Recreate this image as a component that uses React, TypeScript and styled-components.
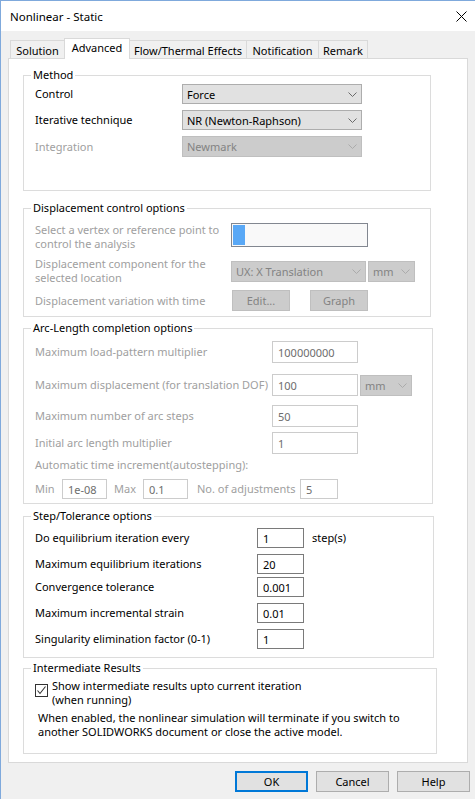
import React from "react";
import styled, { createGlobalStyle } from "styled-components";

const Global = createGlobalStyle`
  html, body { margin: 0; padding: 0; background: #f0f0f0; }
  body {
    font-family: "Segoe UI", "Noto Sans", sans-serif;
    font-size: 11px;
    color: #000;
  }
`;

const Window = styled.div`
  width: 475px;
  height: 799px;
  box-sizing: border-box;
  border-top: 1px solid #7fa9dc;
  border-left: 1px solid #7fa9dc;
  background: #f0f0f0;
  display: flex;
  flex-direction: column;
  overflow: hidden;
`;

const TitleBar = styled.div`
  height: 30px;
  flex: none;
  background: #fff;
  display: flex;
  align-items: center;
  justify-content: space-between;
  padding: 0 8px 0 9px;
`;

const Title = styled.div`
  font-size: 11.5px;
  line-height: 14px;
  padding-top: 1px;
`;

const Body = styled.div`
  padding: 7px 0 0 7px;
  display: flex;
  flex-direction: column;
`;

const TabStrip = styled.div`
  display: flex;
  align-items: flex-end;
  height: 21px;
  margin-bottom: -1px;
  padding-left: 2px;
`;

const Tab = styled.div<{ $w: number; $active?: boolean }>`
  box-sizing: border-box;
  width: ${(p) => p.$w}px;
  height: ${(p) => (p.$active ? 21 : 19)}px;
  margin-left: -1px;
  &:first-child { margin-left: 0; }
  border: 1px solid #d9d9d9;
  border-bottom: none;
  background: ${(p) => (p.$active ? "#fff" : "#f0f0f0")};
  position: ${(p) => (p.$active ? "relative" : "static")};
  z-index: ${(p) => (p.$active ? 1 : "auto")};
  display: flex;
  justify-content: center;
  align-items: ${(p) => (p.$active ? "flex-start" : "center")};
  padding-top: ${(p) => (p.$active ? 2 : 1)}px;
  line-height: 14px;
  white-space: nowrap;
`;

const Panel = styled.div`
  box-sizing: border-box;
  width: 460px;
  height: 705px;
  background: #fff;
  border: 1px solid #d9d9d9;
  padding: 0 0 0 14px;
  display: flex;
  flex-direction: column;
`;

const Group = styled.div<{ $mt: number; $w: number; $pb: number }>`
  box-sizing: border-box;
  width: ${(p) => p.$w}px;
  margin-top: ${(p) => p.$mt}px;
  border: 1px solid #dcdcdc;
  padding: 0 0 ${(p) => p.$pb}px 11px;
  display: flex;
  flex-direction: column;
`;

const Legend = styled.div`
  align-self: flex-start;
  margin: -8px 0 0 -4px;
  padding: 0 2px;
  background: #fff;
  line-height: 14px;
  height: 14px;
  white-space: nowrap;
`;

const Row = styled.div<{ $mt: number; $h: number; $top?: boolean }>`
  display: flex;
  align-items: ${(p) => (p.$top ? "flex-start" : "center")};
  margin-top: ${(p) => p.$mt}px;
  height: ${(p) => p.$h}px;
`;

const Label = styled.div<{ $w?: number; $disabled?: boolean; $ml?: number }>`
  flex: none;
  width: ${(p) => (p.$w ? `${p.$w}px` : "auto")};
  margin-left: ${(p) => p.$ml ?? 0}px;
  color: ${(p) => (p.$disabled ? "#a0a0a0" : "#000")};
  line-height: 14px;
  white-space: nowrap;
`;

const SelectBox = styled.div<{ $w: number; $h: number; $disabled?: boolean; $ml?: number }>`
  flex: none;
  box-sizing: border-box;
  width: ${(p) => p.$w}px;
  height: ${(p) => p.$h}px;
  margin-left: ${(p) => p.$ml ?? 0}px;
  display: flex;
  align-items: center;
  justify-content: space-between;
  padding: 0 4px 0 4px;
  background: ${(p) => (p.$disabled ? "#cccccc" : "#e1e1e1")};
  border: 1px solid ${(p) => (p.$disabled ? "#bfbfbf" : "#adadad")};
  color: ${(p) => (p.$disabled ? "#838383" : "#000")};
  white-space: nowrap;
`;

const TextBox = styled.div<{ $w: number; $h: number; $disabled?: boolean; $ml?: number }>`
  flex: none;
  box-sizing: border-box;
  width: ${(p) => p.$w}px;
  height: ${(p) => p.$h}px;
  margin-left: ${(p) => p.$ml ?? 0}px;
  border: 1px solid ${(p) => (p.$disabled ? "#cccccc" : "#7a7a7a")};
  background: #fff;
  padding-left: 5px;
  display: flex;
  align-items: center;
  color: ${(p) => (p.$disabled ? "#6d6d6d" : "#000")};
`;

const PickBox = styled.div`
  flex: none;
  box-sizing: border-box;
  width: 137px;
  height: 24px;
  border: 1px solid #828790;
  background: #f9f9f9;
  padding: 1px;
  display: flex;
`;

const PickMark = styled.div`
  width: 12px;
  background: #59a8f6;
`;

const SmallButton = styled.div<{ $w: number; $ml?: number }>`
  flex: none;
  box-sizing: border-box;
  width: ${(p) => p.$w}px;
  height: 21px;
  margin-left: ${(p) => p.$ml ?? 0}px;
  background: #cccccc;
  border: 1px solid #bfbfbf;
  color: #838383;
  display: flex;
  align-items: center;
  justify-content: center;
`;

const CheckRow = styled.div`
  display: flex;
  align-items: flex-start;
  margin-top: 4px;
`;

const CheckBox = styled.div`
  flex: none;
  box-sizing: border-box;
  width: 13px;
  height: 13px;
  margin-top: 5px;
  border: 1px solid #333;
  background: #fff;
  display: flex;
  align-items: center;
  justify-content: center;
`;

const CheckText = styled.div`
  margin-left: 4px;
  line-height: 14px;
`;

const Note = styled.div`
  margin-top: 4px;
  padding-left: 3px;
  line-height: 14px;
`;

const ButtonRow = styled.div`
  display: flex;
  justify-content: flex-end;
  gap: 8px;
  margin-top: 8px;
  padding-right: 5px;
`;

const DialogButton = styled.div<{ $default?: boolean }>`
  box-sizing: border-box;
  width: 73px;
  height: 21px;
  background: #e1e1e1;
  border: ${(p) => (p.$default ? "2px solid #0078d7" : "1px solid #adadad")};
  display: flex;
  align-items: center;
  justify-content: center;
`;

const Chevron = ({ disabled }: { disabled?: boolean }) => (
  <svg width="9" height="5" viewBox="0 0 9 5" style={{ flex: "none" }}>
    <path
      d="M0.5 0.5 L4.5 4.5 L8.5 0.5"
      fill="none"
      stroke={disabled ? "#ababab" : "#6a6a6a"}
      strokeWidth="1"
    />
  </svg>
);

const CloseIcon = () => (
  <svg width="11" height="11" viewBox="0 0 11 11">
    <path d="M0.5 0.5 L10.5 10.5 M10.5 0.5 L0.5 10.5" stroke="#000" strokeWidth="1" fill="none" />
  </svg>
);

const CheckMark = () => (
  <svg width="11" height="11" viewBox="0 0 11 11">
    <path d="M1.5 5.5 L4 8.5 L9.5 1.5" stroke="#333" strokeWidth="1.1" fill="none" />
  </svg>
);

type SelProps = { w: number; h: number; value: string; disabled?: boolean; ml?: number };
const Select = ({ w, h, value, disabled, ml }: SelProps) => (
  <SelectBox $w={w} $h={h} $disabled={disabled} $ml={ml}>
    <span>{value}</span>
    <Chevron disabled={disabled} />
  </SelectBox>
);

export default function App() {
  return (
    <>
      <Global />
      <Window>
        <TitleBar>
          <Title>Nonlinear - Static</Title>
          <CloseIcon />
        </TitleBar>
        <Body>
          <TabStrip>
            <Tab $w={55}>Solution</Tab>
            <Tab $w={66} $active>
              Advanced
            </Tab>
            <Tab $w={118}>Flow/Thermal Effects</Tab>
            <Tab $w={73}>Notification</Tab>
            <Tab $w={50}>Remark</Tab>
          </TabStrip>
          <Panel>
            <Group $mt={16} $w={408} $pb={33}>
              <Legend>Method</Legend>
              <Row $mt={2} $h={20}>
                <Label $w={147}>Control</Label>
                <Select w={180} h={20} value="Force" />
              </Row>
              <Row $mt={6} $h={20}>
                <Label $w={147}>Iterative technique</Label>
                <Select w={180} h={20} value="NR (Newton-Raphson)" />
              </Row>
              <Row $mt={6} $h={21}>
                <Label $w={147} $disabled>
                  Integration
                </Label>
                <Select w={180} h={21} value="Newmark" disabled />
              </Row>
            </Group>

            <Group $mt={17} $w={408} $pb={5}>
              <Legend>Displacement control options</Legend>
              <Row $mt={8} $h={28} $top>
                <Label $w={196} $disabled>
                  Select a vertex or reference point to
                  <br />
                  control the analysis
                </Label>
                <PickBox>
                  <PickMark />
                </PickBox>
              </Row>
              <Row $mt={6} $h={28}>
                <Label $w={196} $disabled>
                  Displacement component for the
                  <br />
                  selected location
                </Label>
                <Select w={135} h={21} value="UX: X Translation" disabled />
                <Select w={47} h={21} value="mm" disabled ml={2} />
              </Row>
              <Row $mt={5} $h={21}>
                <Label $w={197} $disabled>
                  Displacement variation with time
                </Label>
                <SmallButton $w={58}>Edit...</SmallButton>
                <SmallButton $w={58} $ml={20}>
                  Graph
                </SmallButton>
              </Row>
            </Group>

            <Group $mt={11} $w={410} $pb={4}>
              <Legend>Arc-Length completion options</Legend>
              <Row $mt={6} $h={22}>
                <Label $w={237} $disabled>
                  Maximum load-pattern multiplier
                </Label>
                <TextBox $w={86} $h={22} $disabled>
                  100000000
                </TextBox>
              </Row>
              <Row $mt={11} $h={22}>
                <Label $w={237} $disabled>
                  Maximum displacement (for translation DOF)
                </Label>
                <TextBox $w={86} $h={22} $disabled>
                  100
                </TextBox>
                <Select w={52} h={21} value="mm" disabled ml={2} />
              </Row>
              <Row $mt={9} $h={22}>
                <Label $w={237} $disabled>
                  Maximum number of arc steps
                </Label>
                <TextBox $w={86} $h={22} $disabled>
                  50
                </TextBox>
              </Row>
              <Row $mt={5} $h={22}>
                <Label $w={237} $disabled>
                  Initial arc length multiplier
                </Label>
                <TextBox $w={86} $h={22} $disabled>
                  1
                </TextBox>
              </Row>
              <Row $mt={4} $h={13}>
                <Label $disabled>Automatic time increment(autostepping):</Label>
              </Row>
              <Row $mt={8} $h={20}>
                <Label $w={27} $disabled>
                  Min
                </Label>
                <TextBox $w={45} $h={20} $disabled>
                  1e-08
                </TextBox>
                <Label $w={29} $ml={7} $disabled>
                  Max
                </Label>
                <TextBox $w={45} $h={20} $disabled>
                  0.1
                </TextBox>
                <Label $w={103} $ml={9} $disabled>
                  No. of adjustments
                </Label>
                <TextBox $w={38} $h={20} $disabled>
                  5
                </TextBox>
              </Row>
            </Group>

            <Group $mt={12} $w={411} $pb={8}>
              <Legend>Step/Tolerance options</Legend>
              <Row $mt={5} $h={20}>
                <Label $w={222}>Do equilibrium iteration every</Label>
                <TextBox $w={47} $h={20}>
                  1
                </TextBox>
                <Label $ml={8}>step(s)</Label>
              </Row>
              <Row $mt={6} $h={20}>
                <Label $w={222}>Maximum equilibrium iterations</Label>
                <TextBox $w={47} $h={20}>
                  20
                </TextBox>
              </Row>
              <Row $mt={3} $h={20}>
                <Label $w={222}>Convergence tolerance</Label>
                <TextBox $w={47} $h={20}>
                  0.001
                </TextBox>
              </Row>
              <Row $mt={6} $h={20}>
                <Label $w={222}>Maximum incremental strain</Label>
                <TextBox $w={47} $h={20}>
                  0.01
                </TextBox>
              </Row>
              <Row $mt={6} $h={20}>
                <Label $w={222}>Singularity elimination factor (0-1)</Label>
                <TextBox $w={47} $h={20}>
                  1
                </TextBox>
              </Row>
            </Group>

            <Group $mt={10} $w={414} $pb={14}>
              <Legend>Intermediate Results</Legend>
              <CheckRow>
                <CheckBox>
                  <CheckMark />
                </CheckBox>
                <CheckText>
                  Show intermediate results upto current iteration
                  <br />
                  (when running)
                </CheckText>
              </CheckRow>
              <Note>
                When enabled, the nonlinear simulation will terminate if you switch to
                <br />
                another SOLIDWORKS document or close the active model.
              </Note>
            </Group>
          </Panel>
          <ButtonRow>
            <DialogButton $default>OK</DialogButton>
            <DialogButton>Cancel</DialogButton>
            <DialogButton>Help</DialogButton>
          </ButtonRow>
        </Body>
      </Window>
    </>
  );
}
